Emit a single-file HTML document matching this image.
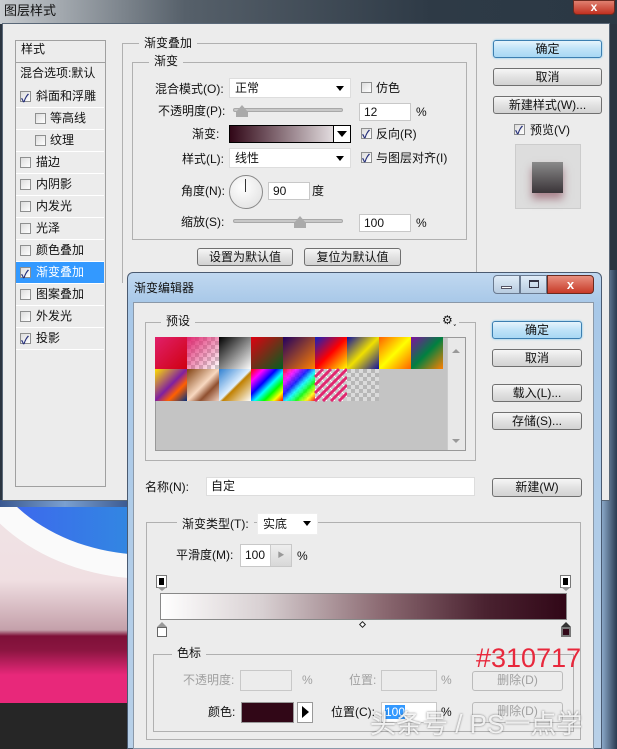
<!DOCTYPE html>
<html><head><meta charset="utf-8"><style>
*{box-sizing:border-box;margin:0;padding:0}
body{width:617px;height:749px;overflow:hidden;position:relative;background:#2a3440;font-family:"Liberation Sans","Noto Sans CJK SC",sans-serif;font-size:12px;color:#111}
.a{position:absolute}
.t{position:absolute;white-space:nowrap;line-height:14px}
.inp{position:absolute;background:#fff;border:1px solid #c8c8c8;padding-left:4px;line-height:16px;font-size:12px}
.btn{position:absolute;border:1px solid #707070;border-radius:3px;background:linear-gradient(#f6f6f6,#e2e2e2 50%,#d2d2d2);text-align:center;line-height:16px}
.btn.b{border-color:#3c7fb1;background:linear-gradient(#e6f4fc,#bfe3f8 50%,#a8d8f4);box-shadow:0 0 2px #6cc4f0}
.cb{position:absolute;width:11px;height:11px;border:1px solid #8e8f8f;background:linear-gradient(135deg,#dcdcdc,#fff)}
.cb.c::after{content:"✓";position:absolute;left:0px;top:-3px;font-size:11px;color:#26307a;font-weight:bold}
.grp{position:absolute;border:1px solid #b0b0b0}
.lbl{position:absolute;background:#ececec;padding:0 5px;line-height:14px;white-space:nowrap}
.sel{position:absolute;background:#fff;border:1px solid #ddd;padding-left:5px;line-height:18px}
.sel::after{content:"";position:absolute;right:6px;top:7px;border:4px solid transparent;border-top:5px solid #000}
.li{position:absolute;left:16px;width:88px;height:22px;border-bottom:1px solid #fff;line-height:21px;padding-left:20px;white-space:nowrap}
.li .cb{left:4px;top:5px}
.sl{position:absolute;height:4px;background:#c8c8c8;border:1px solid #a8a8a8;border-radius:2px}
.th{position:absolute;width:0;height:0;border:6px solid transparent;border-bottom:7px solid #aaa}
.g{color:#a0a0a0}
</style></head><body>
<div class="a" style="left:0;top:500px;width:130px;height:249px;overflow:hidden;background:linear-gradient(#f0e4e6 0,#f0dfe2 80px,#c4a0aa 130px,#7e1038 136px,#8a1540 150px,#e8287a 175px,#e8287a 203px,#262626 203px)">
<div class="a" style="left:-20px;top:-200px;width:340px;height:255px;border-radius:50%;background:linear-gradient(90deg,#4060f0,#20b8d0);box-shadow:0 0 0 24px #fafafa"></div>
</div>
<div class="a" style="left:0;top:500px;width:130px;height:7px;background:linear-gradient(90deg,#3a5890,#7aa0d0,#3a5890)"></div>
<div class="a" style="left:602px;top:270px;width:15px;height:479px;background:linear-gradient(90deg,#8aa8c8,#2a3a50)"></div>
<div class="a" style="left:0;top:0;width:617px;height:24px;background:linear-gradient(90deg,#c8ccd0,#56606a 30%,#2e3a46 70%,#2a3844)"></div>
<div class="t" style="left:4px;top:4px;font-size:13px">图层样式</div>
<div class="a" style="left:573px;top:0;width:42px;height:15px;border-radius:0 0 4px 4px;background:linear-gradient(#e08070,#c03020);border:1px solid #6a2a20;color:#fff;text-align:center;font-weight:bold;line-height:13px">x</div>
<div class="a" style="left:2px;top:23px;width:608px;height:478px;background:#ececec;border:1px solid #5a6878"></div>
<div class="a" style="left:15px;top:40px;width:91px;height:447px;border:1px solid #a0a0a0;background:#ececec"></div>
<div class="t" style="left:21px;top:42px">样式</div>
<div class="a" style="left:16px;top:62px;width:89px;height:1px;background:#a0a0a0"></div>
<div class="t" style="left:20px;top:66px">混合选项:默认</div>
<div class="li" style="top:86px"><div class="cb c"></div>斜面和浮雕</div>
<div class="li" style="top:108px;padding-left:34px"><div class="cb" style="left:19px"></div>等高线</div>
<div class="li" style="top:130px;padding-left:34px"><div class="cb" style="left:19px"></div>纹理</div>
<div class="li" style="top:152px"><div class="cb"></div>描边</div>
<div class="li" style="top:174px"><div class="cb"></div>内阴影</div>
<div class="li" style="top:196px"><div class="cb"></div>内发光</div>
<div class="li" style="top:218px"><div class="cb"></div>光泽</div>
<div class="li" style="top:240px"><div class="cb"></div>颜色叠加</div>
<div class="li" style="top:262px;background:#3399ff;color:#fff"><div class="cb c"></div>渐变叠加</div>
<div class="li" style="top:284px"><div class="cb"></div>图案叠加</div>
<div class="li" style="top:306px"><div class="cb"></div>外发光</div>
<div class="li" style="top:328px"><div class="cb c"></div>投影</div>
<div class="grp" style="left:122px;top:43px;width:355px;height:240px;border-bottom:none"></div>
<div class="lbl" style="left:139px;top:36px">渐变叠加</div>
<div class="grp" style="left:132px;top:62px;width:335px;height:178px"></div>
<div class="lbl" style="left:149px;top:54px">渐变</div>
<div class="t" style="left:155px;top:82px">混合模式(O):</div>
<div class="sel" style="left:229px;top:78px;width:122px;height:20px">正常</div>
<div class="cb" style="left:361px;top:82px"></div><div class="t" style="left:376px;top:81px">仿色</div>
<div class="t" style="left:158px;top:104px">不透明度(P):</div>
<div class="sl" style="left:233px;top:108px;width:110px"></div>
<div class="th" style="left:236px;top:99px"></div><div class="a" style="left:236px;top:112px;width:12px;height:5px;background:#aaa"></div>
<div class="inp" style="left:359px;top:103px;width:52px;height:18px">12</div><div class="t" style="left:416px;top:105px">%</div>
<div class="t" style="left:192px;top:127px">渐变:</div>
<div class="a" style="left:229px;top:125px;width:122px;height:18px;border:1px solid #000;background:linear-gradient(90deg,#310717,#fff)"></div>
<div class="a" style="left:333px;top:126px;width:17px;height:16px;background:#fff;border-left:1px solid #000"></div>
<div class="a" style="left:337px;top:131px;border:5px solid transparent;border-top:6px solid #000"></div>
<div class="cb c" style="left:361px;top:128px"></div><div class="t" style="left:376px;top:127px">反向(R)</div>
<div class="t" style="left:182px;top:152px">样式(L):</div>
<div class="sel" style="left:229px;top:148px;width:122px;height:20px">线性</div>
<div class="cb c" style="left:361px;top:152px"></div><div class="t" style="left:376px;top:151px">与图层对齐(I)</div>
<div class="t" style="left:181px;top:184px">角度(N):</div>
<div class="a" style="left:229px;top:175px;width:34px;height:34px;border-radius:50%;border:1px solid #888;background:radial-gradient(circle at 40% 35%,#fff,#ddd)"></div>
<div class="a" style="left:245px;top:179px;width:1px;height:13px;background:#333"></div>
<div class="inp" style="left:268px;top:182px;width:42px;height:18px">90</div><div class="t" style="left:312px;top:184px">度</div>
<div class="t" style="left:181px;top:215px">缩放(S):</div>
<div class="sl" style="left:233px;top:219px;width:110px"></div>
<div class="th" style="left:294px;top:210px"></div><div class="a" style="left:294px;top:223px;width:12px;height:5px;background:#aaa"></div>
<div class="inp" style="left:359px;top:214px;width:52px;height:18px">100</div><div class="t" style="left:416px;top:216px">%</div>
<div class="btn" style="left:197px;top:248px;width:96px;height:18px">设置为默认值</div>
<div class="btn" style="left:304px;top:248px;width:97px;height:18px">复位为默认值</div>
<div class="btn b" style="left:493px;top:40px;width:109px;height:18px">确定</div>
<div class="btn" style="left:493px;top:68px;width:109px;height:18px">取消</div>
<div class="btn" style="left:493px;top:96px;width:109px;height:18px">新建样式(W)...</div>
<div class="cb c" style="left:514px;top:124px"></div><div class="t" style="left:530px;top:123px">预览(V)</div>
<div class="a" style="left:515px;top:144px;width:66px;height:65px;background:#ddd;border:1px solid #ccc"></div>
<div class="a" style="left:532px;top:162px;width:31px;height:31px;background:linear-gradient(#8a8a8a,#3a3438);box-shadow:0 6px 8px rgba(120,40,60,.5)"></div>
<div class="a" style="left:127px;top:272px;width:475px;height:477px;border:1px solid #4a5a70;border-radius:6px 6px 0 0;background:linear-gradient(#c0d8f0,#a8c8e8 30px,#b8d0e8)"></div>
<div class="t" style="left:134px;top:281px;font-size:12px">渐变编辑器</div>
<div class="a" style="left:493px;top:275px;width:27px;height:19px;border:1px solid #6a7a90;border-radius:4px 0 0 4px;background:linear-gradient(#e0ecf8,#b8cce0)"></div>
<div class="a" style="left:501px;top:286px;width:11px;height:3px;background:#fff;border:1px solid #556"></div>
<div class="a" style="left:520px;top:275px;width:27px;height:19px;border:1px solid #6a7a90;background:linear-gradient(#e0ecf8,#b8cce0)"></div>
<div class="a" style="left:529px;top:280px;width:10px;height:8px;border:1px solid #334;border-top-width:2px"></div>
<div class="a" style="left:547px;top:275px;width:47px;height:19px;border:1px solid #6a2a20;border-radius:0 4px 4px 0;background:linear-gradient(#e89080,#c83a28);color:#fff;text-align:center;font-weight:bold;line-height:17px;font-size:13px">x</div>
<div class="a" style="left:133px;top:302px;width:461px;height:447px;background:#ececec;border:1px solid #8a98a8"></div>
<div class="grp" style="left:145px;top:322px;width:331px;height:139px"></div>
<div class="lbl" style="left:161px;top:314px">预设</div>
<div class="lbl" style="left:440px;top:313px;padding:0 2px">⚙˯</div>
<div class="a" style="left:155px;top:337px;width:311px;height:114px;background:#c4c4c4;border:1px solid #999"></div>
<svg class="a" style="left:155px;top:337px" width="293" height="65">
<defs>
<pattern id="ck" width="8" height="8" patternUnits="userSpaceOnUse"><rect width="8" height="8" fill="#fff"/><rect width="4" height="4" fill="#ccc"/><rect x="4" y="4" width="4" height="4" fill="#ccc"/></pattern>
<linearGradient id="g1" x1="0" y1="0" x2="1" y2="1"><stop offset="0" stop-color="#e0206a"/><stop offset="1" stop-color="#d00010"/></linearGradient>
<linearGradient id="g2" x1="0" y1="0" x2="1" y2="1"><stop offset="0" stop-color="#e02870"/><stop offset="1" stop-color="#e02870" stop-opacity="0"/></linearGradient>
<linearGradient id="g3" x1="0" y1="0" x2="1" y2="1"><stop offset="0" stop-color="#000"/><stop offset="1" stop-color="#fff"/></linearGradient>
<linearGradient id="g4" x1="0" y1="0" x2="1" y2="1"><stop offset="0" stop-color="#e00010"/><stop offset="1" stop-color="#006020"/></linearGradient>
<linearGradient id="g5" x1="0" y1="0" x2="1" y2="1"><stop offset="0" stop-color="#200060"/><stop offset="1" stop-color="#ff8000"/></linearGradient>
<linearGradient id="g6" x1="0" y1="0" x2="1" y2="1"><stop offset="0" stop-color="#1020c0"/><stop offset=".5" stop-color="#ff0000"/><stop offset="1" stop-color="#ffff00"/></linearGradient>
<linearGradient id="g7" x1="0" y1="0" x2="1" y2="1"><stop offset="0" stop-color="#1010a0"/><stop offset=".5" stop-color="#f0e000"/><stop offset="1" stop-color="#1010a0"/></linearGradient>
<linearGradient id="g8" x1="0" y1="0" x2="1" y2="1"><stop offset="0" stop-color="#ff6000"/><stop offset=".5" stop-color="#ffff00"/><stop offset="1" stop-color="#ff6000"/></linearGradient>
<linearGradient id="g9" x1="0" y1="0" x2="1" y2="1"><stop offset="0" stop-color="#8010a0"/><stop offset=".5" stop-color="#008040"/><stop offset="1" stop-color="#ff8000"/></linearGradient>
<linearGradient id="h1" x1="0" y1="0" x2="1" y2="1"><stop offset="0" stop-color="#ffe000"/><stop offset=".5" stop-color="#8020a0"/><stop offset=".7" stop-color="#ff6000"/><stop offset="1" stop-color="#003080"/></linearGradient>
<linearGradient id="h2" x1="0" y1="0" x2="1" y2="1"><stop offset="0" stop-color="#804010"/><stop offset=".5" stop-color="#f8d8c0"/><stop offset=".7" stop-color="#905030"/><stop offset="1" stop-color="#f0d0c0"/></linearGradient>
<linearGradient id="h3" x1="0" y1="0" x2="1" y2="1"><stop offset="0" stop-color="#3080d0"/><stop offset=".5" stop-color="#e0f0ff"/><stop offset=".55" stop-color="#c08000"/><stop offset="1" stop-color="#fff"/></linearGradient>
<linearGradient id="h4" x1="0" y1="0" x2="1" y2="1"><stop offset="0" stop-color="#f00"/><stop offset=".2" stop-color="#f0f"/><stop offset=".4" stop-color="#00f"/><stop offset=".55" stop-color="#0ff"/><stop offset=".7" stop-color="#0f0"/><stop offset=".85" stop-color="#ff0"/><stop offset="1" stop-color="#f00"/></linearGradient>
</defs>
<rect x="0" y="0" width="32" height="32" fill="url(#g1)"/>
<rect x="32" y="0" width="32" height="32" fill="url(#ck)"/><rect x="32" y="0" width="32" height="32" fill="url(#g2)"/>
<rect x="64" y="0" width="32" height="32" fill="url(#g3)"/>
<rect x="96" y="0" width="32" height="32" fill="url(#g4)"/>
<rect x="128" y="0" width="32" height="32" fill="url(#g5)"/>
<rect x="160" y="0" width="32" height="32" fill="url(#g6)"/>
<rect x="192" y="0" width="32" height="32" fill="url(#g7)"/>
<rect x="224" y="0" width="32" height="32" fill="url(#g8)"/>
<rect x="256" y="0" width="32" height="32" fill="url(#g9)"/>
<rect x="0" y="32" width="32" height="32" fill="url(#h1)"/>
<rect x="32" y="32" width="32" height="32" fill="url(#h2)"/>
<rect x="64" y="32" width="32" height="32" fill="url(#h3)"/>
<rect x="96" y="32" width="32" height="32" fill="url(#h4)"/>
<rect x="128" y="32" width="32" height="32" fill="url(#ck)"/><rect x="128" y="32" width="32" height="32" fill="url(#h4)" opacity=".85"/>
<rect x="160" y="32" width="32" height="32" fill="url(#ck)"/>
<g stroke="#e02870" stroke-width="3"><line x1="160" y1="56" x2="184" y2="32"/><line x1="160" y1="48" x2="176" y2="32"/><line x1="160" y1="40" x2="168" y2="32"/><line x1="168" y1="64" x2="192" y2="40"/><line x1="176" y1="64" x2="192" y2="48"/><line x1="184" y1="64" x2="192" y2="56"/><line x1="160" y1="64" x2="192" y2="32"/></g>
<rect x="192" y="32" width="32" height="32" fill="url(#ck)"/><rect x="192" y="32" width="32" height="32" fill="#888" opacity=".3"/>
</svg>
<div class="a" style="left:447px;top:338px;width:18px;height:112px;background:#e8e8e8;border-left:1px solid #ccc"></div>
<div class="a" style="left:452px;top:345px;border:4px solid transparent;border-bottom:4px solid #999"></div>
<div class="a" style="left:452px;top:439px;border:4px solid transparent;border-top:4px solid #999"></div>
<div class="btn b" style="left:492px;top:321px;width:90px;height:18px">确定</div>
<div class="btn" style="left:492px;top:349px;width:90px;height:18px">取消</div>
<div class="btn" style="left:492px;top:384px;width:90px;height:18px">载入(L)...</div>
<div class="btn" style="left:492px;top:412px;width:90px;height:18px">存储(S)...</div>
<div class="t" style="left:145px;top:480px">名称(N):</div>
<div class="inp" style="left:206px;top:477px;width:269px;height:19px;border-color:#ddd">自定</div>
<div class="btn" style="left:492px;top:478px;width:90px;height:19px">新建(W)</div>
<div class="grp" style="left:146px;top:522px;width:435px;height:218px"></div>
<div class="lbl" style="left:177px;top:517px">渐变类型(T):</div>
<div class="sel" style="left:257px;top:513px;width:61px;height:22px;border-color:#eee;line-height:20px">实底</div>
<div class="t" style="left:176px;top:548px">平滑度(M):</div>
<div class="inp" style="left:240px;top:544px;width:52px;height:23px;line-height:21px">100</div>
<div class="a" style="left:270px;top:545px;width:21px;height:21px;background:linear-gradient(#eee,#d8d8d8);border-left:1px solid #ccc;color:#999;font-size:7px;text-align:center;line-height:21px">▶</div>
<div class="t" style="left:297px;top:549px">%</div>
<div class="a" style="left:157px;top:576px;width:9px;height:11px;background:#000;border:2px solid #fff;outline:1px solid #777"></div>
<div class="a" style="left:157px;top:587px;border:5px solid transparent;border-top:4px solid #999"></div>
<div class="a" style="left:561px;top:576px;width:9px;height:11px;background:#000;border:2px solid #fff;outline:1px solid #777"></div>
<div class="a" style="left:561px;top:587px;border:5px solid transparent;border-top:4px solid #999"></div>
<div class="a" style="left:160px;top:593px;width:407px;height:27px;border:1px solid #888;background:linear-gradient(90deg,#fff,#d8d0d2 25%,#8a6870 55%,#4a2230 80%,#310717)"></div>
<div class="a" style="left:360px;top:622px;width:5px;height:5px;border:1px solid #222;background:#fff;transform:rotate(45deg)"></div>
<div class="a" style="left:157px;top:622px;border:5px solid transparent;border-bottom:5px solid #999;border-top:0"></div>
<div class="a" style="left:157px;top:627px;width:10px;height:10px;background:#fff;border:1px solid #666"></div>
<div class="a" style="left:561px;top:622px;border:5px solid transparent;border-bottom:5px solid #333;border-top:0"></div>
<div class="a" style="left:561px;top:627px;width:10px;height:10px;background:#310717;border:2px solid #777"></div>
<div class="grp" style="left:153px;top:654px;width:421px;height:78px"></div>
<div class="lbl" style="left:172px;top:646px">色标</div>
<div class="t g" style="left:183px;top:673px">不透明度:</div>
<div class="a" style="left:240px;top:670px;width:52px;height:21px;border:1px solid #c8c8c8;background:#ececec"></div>
<div class="t g" style="left:302px;top:673px">%</div>
<div class="t g" style="left:349px;top:673px">位置:</div>
<div class="a" style="left:381px;top:670px;width:56px;height:21px;border:1px solid #c8c8c8"></div>
<div class="t g" style="left:441px;top:673px">%</div>
<div class="btn g" style="left:472px;top:671px;width:91px;height:20px;border-color:#bbb;background:#ececec">删除(D)</div>
<div class="t" style="left:208px;top:705px">颜色:</div>
<div class="a" style="left:241px;top:702px;width:53px;height:21px;background:#310717;border:1px solid #999"></div>
<div class="a" style="left:297px;top:702px;width:16px;height:21px;border:1px solid #999;background:#fff"></div>
<div class="a" style="left:302px;top:706px;border:6px solid transparent;border-left:7px solid #000;border-right:0"></div>
<div class="t" style="left:331px;top:705px">位置(C):</div>
<div class="inp" style="left:381px;top:702px;width:56px;height:21px;line-height:19px;padding-left:3px"><span style="background:#3399ff;color:#fff">100</span></div>
<div class="t" style="left:441px;top:705px">%</div>
<div class="btn g" style="left:472px;top:702px;width:91px;height:21px;border-color:#bbb;background:#ececec">删除(D)</div>
<div class="t" style="left:476px;top:642px;font-size:27px;line-height:32px;color:#e8283c;font-family:'Liberation Sans',sans-serif">#310717</div>
<div class="t" style="left:370px;top:707px;font-size:26px;line-height:34px;color:rgba(255,255,255,.85);text-shadow:0 0 2px rgba(0,0,0,.5)">头条号 / PS一点学</div>
</body></html>
